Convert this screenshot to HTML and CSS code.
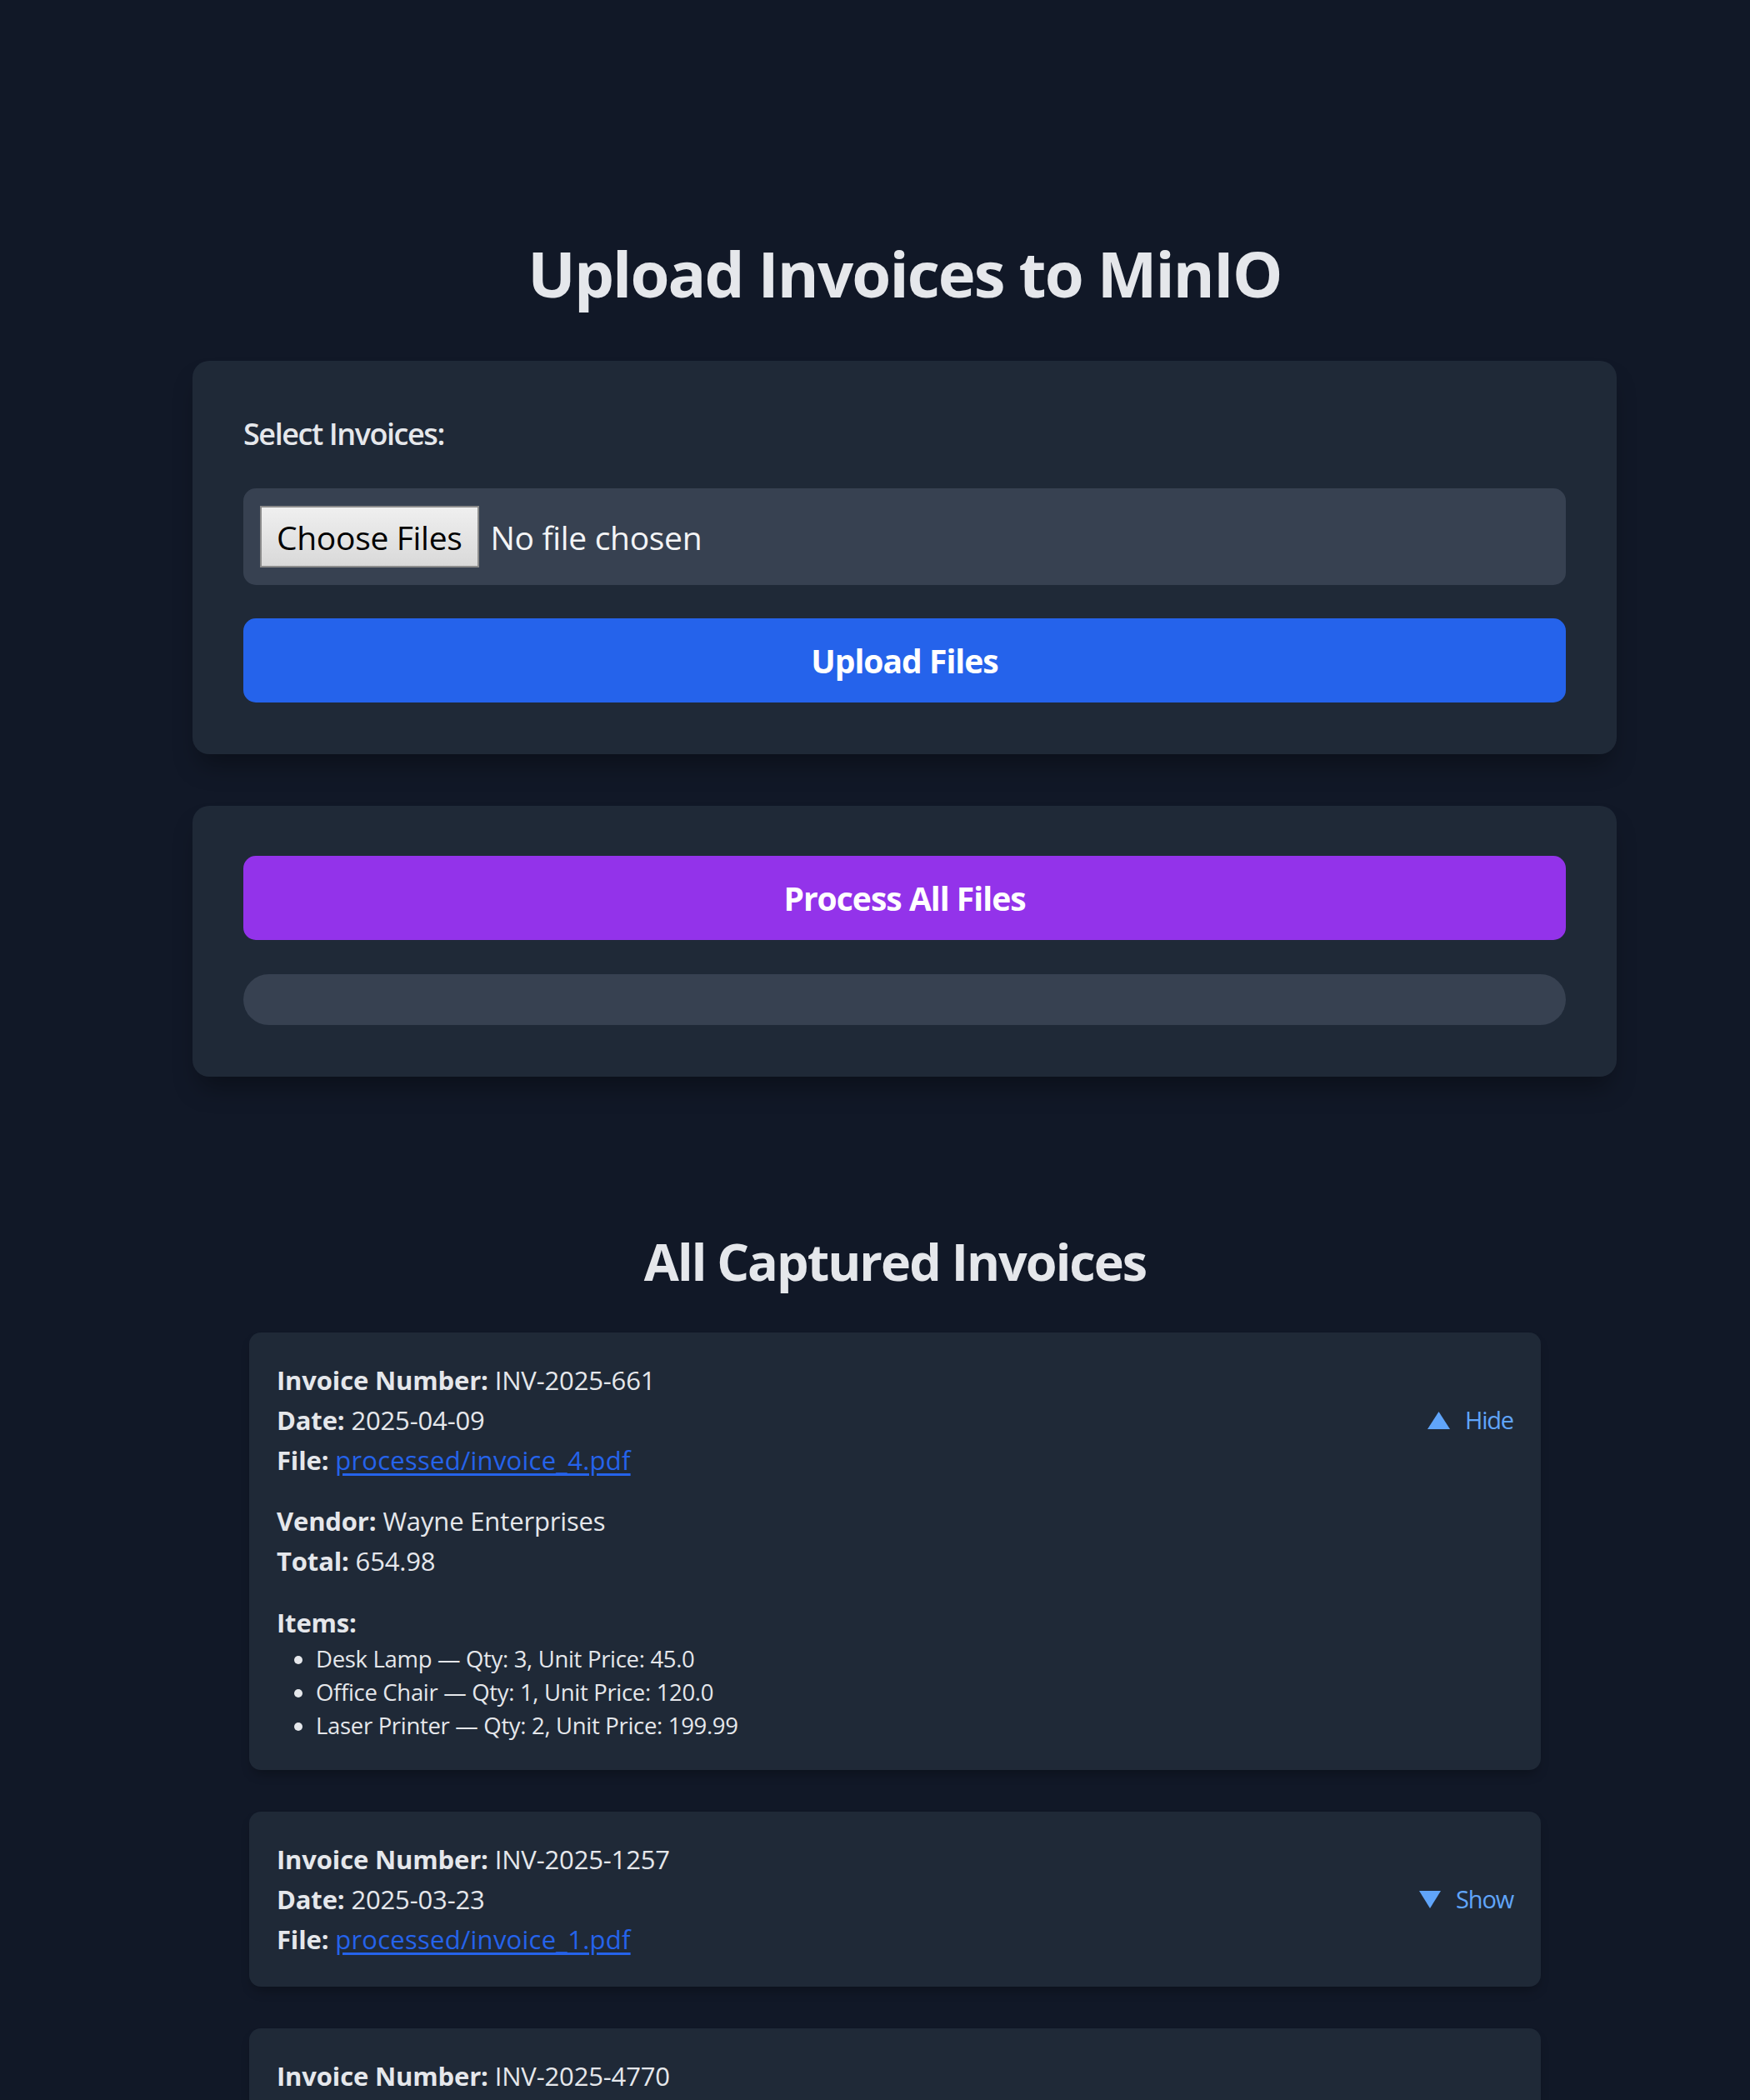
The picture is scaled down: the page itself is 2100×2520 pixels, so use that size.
FILE: index.html
```html
<!DOCTYPE html>
<html lang="en">
<head>
<meta charset="utf-8">
<title>Upload Invoices to MinIO</title>
<link rel="stylesheet" href="styles.css">
</head>
<body>
<main class="uploader">
  <h1 class="title">Upload Invoices to MinIO</h1>

  <section class="panel">
    <form class="upload-form">
      <label class="field-label" for="files">Select Invoices:</label>
      <div class="file-box">
        <label class="file-btn">Choose Files<input id="files" class="file-input" type="file" multiple></label>
        <span class="file-status">No file chosen</span>
      </div>
      <button type="button" class="btn btn-blue">Upload Files</button>
    </form>
  </section>

  <section class="panel">
    <button type="button" class="btn btn-purple">Process All Files</button>
    <div class="progress"><div class="progress-fill" style="width:0%"></div></div>
  </section>
</main>

<section class="invoices">
  <h2 class="section-title">All Captured Invoices</h2>

  <article class="invoice">
    <div class="invoice-head">
      <div class="invoice-meta">
        <p><strong>Invoice Number:</strong> INV-2025-661</p>
        <p><strong>Date:</strong> 2025-04-09</p>
        <p><strong>File:</strong> <a href="#">processed/invoice_4.pdf</a></p>
      </div>
      <button type="button" class="toggle">
        <svg class="tri" width="27" height="21" viewBox="0 0 27 21"><polygon points="13.5,0 27,21 0,21"/></svg>
        <span>Hide</span>
      </button>
    </div>
    <div class="invoice-details">
      <p><strong>Vendor:</strong> Wayne Enterprises</p>
      <p><strong>Total:</strong> 654.98</p>
      <p class="items-label"><strong>Items:</strong></p>
      <ul class="items">
        <li>Desk Lamp — Qty: 3, Unit Price: 45.0</li>
        <li>Office Chair — Qty: 1, Unit Price: 120.0</li>
        <li>Laser Printer — Qty: 2, Unit Price: 199.99</li>
      </ul>
    </div>
  </article>

  <article class="invoice">
    <div class="invoice-head">
      <div class="invoice-meta">
        <p><strong>Invoice Number:</strong> INV-2025-1257</p>
        <p><strong>Date:</strong> 2025-03-23</p>
        <p><strong>File:</strong> <a href="#">processed/invoice_1.pdf</a></p>
      </div>
      <button type="button" class="toggle">
        <svg class="tri" width="26" height="21" viewBox="0 0 26 21"><polygon points="0,0 26,0 13,21"/></svg>
        <span>Show</span>
      </button>
    </div>
  </article>

  <article class="invoice">
    <div class="invoice-head">
      <div class="invoice-meta">
        <p><strong>Invoice Number:</strong> INV-2025-4770</p>
        <p><strong>Date:</strong> 2025-02-14</p>
        <p><strong>File:</strong> <a href="#">processed/invoice_2.pdf</a></p>
      </div>
      <button type="button" class="toggle">
        <svg class="tri" width="26" height="21" viewBox="0 0 26 21"><polygon points="0,0 26,0 13,21"/></svg>
        <span>Show</span>
      </button>
    </div>
  </article>
</section>
</body>
</html>
```

FILE: styles.css
```css
* { box-sizing: border-box; }

html, body {
  margin: 0;
  background: #111827;
}

body {
  font-family: "Open Sans", "Noto Sans", sans-serif;
  color: #e5e7eb;
  letter-spacing: -0.02em;
}

.uploader {
  width: 1709px;
  margin-left: 231px;
  padding-top: 280px;
  padding-bottom: 1px;
}

.title {
  margin: 0 0 57px;
  font-size: 76px;
  line-height: 96px;
  font-weight: 700;
  letter-spacing: -0.025em;
  text-align: center;
  color: #e5e7eb;
}

.panel {
  background: #1f2937;
  border-radius: 20px;
  padding: 60px 61px 62px;
  margin-bottom: 62px;
  box-shadow: 0 20px 30px -8px rgba(0, 0, 0, 0.35);
}

.upload-form {
  display: flex;
  flex-direction: column;
}

.field-label {
  display: block;
  font-size: 36px;
  line-height: 56px;
  font-weight: 600;
  letter-spacing: -0.04em;
  color: #e5e7eb;
  margin-bottom: 37px;
}

.file-box {
  display: flex;
  align-items: center;
  gap: 14px;
  padding: 21px 20px;
  background: #374151;
  border-radius: 15px;
}

.file-btn {
  display: inline-flex;
  align-items: center;
  height: 74px;
  padding: 0 18px;
  border: 2px solid #8b8b8b;
  background: linear-gradient(#efefef, #d9d9d9);
  color: #000;
  font-size: 39px;
  font-weight: 400;
}

.file-input { display: none; }

.file-status {
  font-size: 39px;
  color: #f3f4f6;
}

.btn {
  display: block;
  width: 100%;
  height: 101px;
  border: none;
  border-radius: 15px;
  color: #fff;
  font-family: inherit;
  font-size: 39px;
  font-weight: 700;
  letter-spacing: -0.025em;
}

.btn-blue {
  margin-top: 40px;
  background: #2563eb;
}

.btn-purple {
  background: #9333ea;
}

.progress {
  margin-top: 41px;
  height: 61px;
  border-radius: 999px;
  background: #374151;
  overflow: hidden;
}

.progress-fill {
  height: 100%;
  background: #22c55e;
}

.invoices {
  width: 1550px;
  margin-left: 299px;
  margin-top: 119px;
}

.section-title {
  margin: 0 0 45px;
  font-size: 61px;
  line-height: 80px;
  font-weight: 700;
  letter-spacing: -0.032em;
  text-align: center;
  color: #e5e7eb;
}

.invoice {
  background: #1f2937;
  border-radius: 14px;
  padding: 33px;
  margin-bottom: 50px;
  box-shadow: 0 8px 14px -4px rgba(0, 0, 0, 0.3);
}

.invoice p {
  margin: 0;
  font-size: 31px;
  line-height: 48px;
  letter-spacing: -0.005em;
}

.invoice strong { font-weight: 700; }

.invoice a {
  color: #2563eb;
  text-decoration: underline;
  text-underline-offset: 4px;
  letter-spacing: 0.008em;
}

.invoice-head {
  display: flex;
  align-items: center;
  justify-content: space-between;
}

.toggle {
  display: flex;
  align-items: center;
  gap: 18px;
  background: none;
  border: none;
  padding: 0;
  color: #60a5fa;
  font-family: inherit;
  font-size: 29px;
  line-height: 48px;
  letter-spacing: -0.04em;
}

.tri { fill: #60a5fa; display: block; }

.invoice-details {
  margin-top: 25px;
}

.items-label {
  margin-top: 26px !important;
}

.items {
  margin: 0;
  padding-left: 47px;
}

.items li {
  font-size: 27.5px;
  line-height: 40px;
}
```
